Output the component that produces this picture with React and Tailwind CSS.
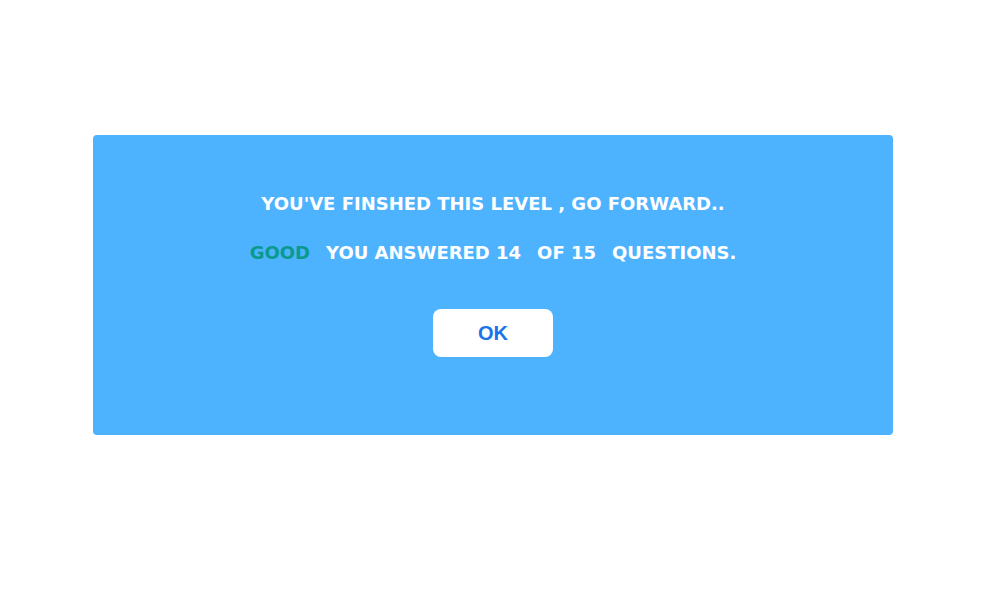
export default function App() {
  return (
    <div className="min-h-screen bg-white pt-[135px] pl-[93px]">
      <div className="w-[800px] h-[300px] rounded bg-[#4db3ff] flex flex-col items-center pt-[57px]">
        <p className="text-white font-bold text-[18px] leading-[24px] font-['DejaVu_Sans',sans-serif]">
          YOU'VE FINSHED THIS LEVEL , GO FORWARD..
        </p>
        <p className="mt-[25px] text-white font-bold text-[18px] leading-[24px] font-['DejaVu_Sans',sans-serif]">
          <span className="text-[#0a9a8c]">GOOD</span>
          <span className="ml-[16px]">YOU ANSWERED 14</span>
          <span className="ml-[16px]">OF 15</span>
          <span className="ml-[16px]">QUESTIONS.</span>
        </p>
        <button className="mt-[44px] w-[120px] h-[48px] rounded-lg bg-white text-[#1a73e8] font-bold text-[20px] font-['Liberation_Sans',sans-serif]">
          OK
        </button>
      </div>
    </div>
  );
}
